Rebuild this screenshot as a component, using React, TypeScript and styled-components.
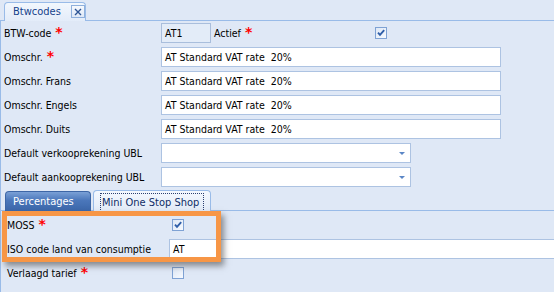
import React from "react";
import styled, { createGlobalStyle } from "styled-components";

const GlobalStyle = createGlobalStyle`
  html, body { margin: 0; padding: 0; background: #dfe8f6; }
  body {
    font-family: "DejaVu Sans Condensed", "Liberation Sans", sans-serif;
    font-stretch: condensed;
    font-size: 10.5px;
    color: #000;
  }
`;

const Page = styled.div`
  position: relative;
  width: 554px;
  height: 292px;
  overflow: hidden;
  background: #dfe8f6;
`;

const TabStrip = styled.div`
  display: flex;
  align-items: flex-end;
  padding-left: 4px;
  border-bottom: 1px solid #99bbe8;
  box-sizing: border-box;
  height: 21px;
`;

const DocTab = styled.div`
  display: flex;
  align-items: center;
  gap: 10px;
  width: 82px;
  height: 19px;
  box-sizing: border-box;
  margin-bottom: -1px;
  padding: 0 0 1px 8px;
  border: 1px solid #99bbe8;
  border-bottom: none;
  border-radius: 4px 4px 0 0;
  background: linear-gradient(#f2f7fd, #e3ecf9);
  color: #15428b;
  font-size: 11px;
`;

const CloseButton = styled.div`
  width: 14px;
  height: 13px;
  box-sizing: border-box;
  border: 1px solid #8fb0dc;
  background: linear-gradient(#f6f9fe, #dfe9f7);
  display: flex;
  align-items: center;
  justify-content: center;
`;

const Body = styled.div`
  border-left: 1px solid #99bbe8;
  height: 271px;
  box-sizing: border-box;
`;

const Form = styled.div`
  display: flex;
  flex-direction: column;
  gap: 4px;
  padding: 2px 0 0 3px;
`;

const Row = styled.div<{ $labelWidth: number }>`
  display: flex;
  align-items: center;
  height: 20px;
  & > label:first-child {
    width: ${(p) => p.$labelWidth}px;
  }
`;

const Label = styled.label<{ $width?: number; $indent?: number }>`
  display: flex;
  align-items: flex-start;
  flex: none;
  ${(p) => (p.$width ? `width: ${p.$width}px;` : "")}
  ${(p) => (p.$indent ? `margin-left: ${p.$indent}px;` : "")}
  white-space: nowrap;
`;

const Star = styled.span`
  color: #ff0000;
  font-family: "DejaVu Sans", sans-serif;
  font-stretch: normal;
  font-weight: bold;
  font-size: 14px;
  line-height: 10px;
  margin-left: 4px;
  margin-top: 0;
`;

const Field = styled.div<{ $width?: number; $disabled?: boolean }>`
  flex: none;
  box-sizing: border-box;
  height: 20px;
  width: ${(p) => (p.$width ? `${p.$width}px` : "auto")};
  ${(p) => (p.$width ? "" : "flex: 1; margin-right: -10px;")}
  border: 1px solid ${(p) => (p.$disabled ? "#a9bedc" : "#adc3e2")};
  background: ${(p) => (p.$disabled ? "#e3ecf8" : "#ffffff")};
  padding: 0 3px;
  display: flex;
  align-items: center;
  white-space: pre;
`;

const Combo = styled(Field)`
  justify-content: flex-end;
  padding-right: 5px;
`;

const Arrow = styled.span`
  width: 0;
  height: 0;
  border-left: 3px solid transparent;
  border-right: 3px solid transparent;
  border-top: 3px solid #5a86c6;
  margin-top: 1px;
`;

const CheckWrap = styled.span<{ $offset: number }>`
  display: flex;
  margin-left: ${(p) => p.$offset}px;
`;

const Check = ({ checked, offset = 0 }: { checked: boolean; offset?: number }) => (
  <CheckWrap $offset={offset}>
    <svg width="12" height="12" viewBox="0 0 12 12">
      <defs>
        <linearGradient id="cbg" x1="0" y1="0" x2="1" y2="1">
          <stop offset="0" stopColor="#dde7f5" />
          <stop offset="1" stopColor="#f7faff" />
        </linearGradient>
      </defs>
      <rect x="0.5" y="0.5" width="11" height="11" fill="url(#cbg)" stroke="#7fa2d4" />
      {checked && (
        <path d="M3 5.6 L5 7.8 L9.2 3.2" fill="none" stroke="#2f5ea8" strokeWidth="1.9" />
      )}
    </svg>
  </CheckWrap>
);

const InnerTabBar = styled.div`
  display: flex;
  align-items: flex-end;
  gap: 2px;
  height: 21px;
  margin-top: 3px;
  padding-left: 4px;
  border-bottom: 1px solid #99bbe8;
  box-sizing: border-box;
`;

const InnerTab = styled.div<{ $active?: boolean }>`
  box-sizing: border-box;
  height: ${(p) => (p.$active ? 21 : 20)}px;
  width: ${(p) => (p.$active ? 118 : 86)}px;
  margin-bottom: -1px;
  border: 1px solid ${(p) => (p.$active ? "#99bbe8" : "#3d66a6")};
  border-bottom: none;
  border-radius: 4px 4px 0 0;
  background: ${(p) =>
    p.$active
      ? "linear-gradient(#f4f8fe, #e2ebf8)"
      : "linear-gradient(#7aa0d6, #4a76ba 45%, #3c67aa)"};
  color: ${(p) => (p.$active ? "#0f2d66" : "#ffffff")};
  font-size: 11px;
  display: flex;
  align-items: center;
  padding: ${(p) => (p.$active ? "2px 6px 1px 6px" : "0 0 1px 7px")};
`;

const FocusRing = styled.span`
  flex: 1;
  height: 100%;
  box-sizing: border-box;
  border: 1px dotted #2b3f70;
  border-bottom: none;
  display: flex;
  align-items: center;
  padding-left: 1px;
`;

const Panel = styled.div`
  display: flex;
  flex-direction: column;
  gap: 4px;
  padding: 4px 0 0 6px;
`;

const Highlight = styled.div`
  position: absolute;
  left: 2px;
  top: 211px;
  width: 219px;
  height: 51px;
  box-sizing: border-box;
  border: 5px solid #f79646;
  box-shadow: 3px 4px 6px rgba(60, 60, 60, 0.55);
  pointer-events: none;
`;

const Req = () => <Star>*</Star>;

export default function App() {
  const vat = "AT Standard VAT rate  20%";
  return (
    <Page>
      <GlobalStyle />
      <TabStrip>
        <DocTab>
          <span>Btwcodes</span>
          <CloseButton>
            <svg width="8" height="8" viewBox="0 0 8 8">
              <path d="M1 1 L7 7 M7 1 L1 7" stroke="#2d5595" strokeWidth="1.4" />
            </svg>
          </CloseButton>
        </DocTab>
      </TabStrip>
      <Body>
        <Form>
          <Row $labelWidth={157}>
            <Label>
              BTW-code<Req />
            </Label>
            <Field $width={50} $disabled>AT1</Field>
            <Label $width={161} $indent={3}>
              Actief<Req />
            </Label>
            <Check checked />
          </Row>
          <Row $labelWidth={157}>
            <Label>
              Omschr.<Req />
            </Label>
            <Field $width={340}>{vat}</Field>
          </Row>
          <Row $labelWidth={157}>
            <Label>Omschr. Frans</Label>
            <Field $width={340}>{vat}</Field>
          </Row>
          <Row $labelWidth={157}>
            <Label>Omschr. Engels</Label>
            <Field $width={340}>{vat}</Field>
          </Row>
          <Row $labelWidth={157}>
            <Label>Omschr. Duits</Label>
            <Field $width={340}>{vat}</Field>
          </Row>
          <Row $labelWidth={157}>
            <Label>Default verkooprekening UBL</Label>
            <Combo $width={250}>
              <Arrow />
            </Combo>
          </Row>
          <Row $labelWidth={157}>
            <Label>Default aankooprekening UBL</Label>
            <Combo $width={250}>
              <Arrow />
            </Combo>
          </Row>
        </Form>
        <InnerTabBar>
          <InnerTab>Percentages</InnerTab>
          <InnerTab $active>
            <FocusRing>Mini One Stop Shop</FocusRing>
          </InnerTab>
        </InnerTabBar>
        <Panel>
          <Row $labelWidth={162}>
            <Label>
              MOSS<Req />
            </Label>
            <Check checked offset={3} />
          </Row>
          <Row $labelWidth={162}>
            <Label>ISO code land van consumptie</Label>
            <Field>AT</Field>
          </Row>
          <Row $labelWidth={162}>
            <Label>
              Verlaagd tarief<Req />
            </Label>
            <Check checked={false} offset={3} />
          </Row>
        </Panel>
      </Body>
      <Highlight />
    </Page>
  );
}
